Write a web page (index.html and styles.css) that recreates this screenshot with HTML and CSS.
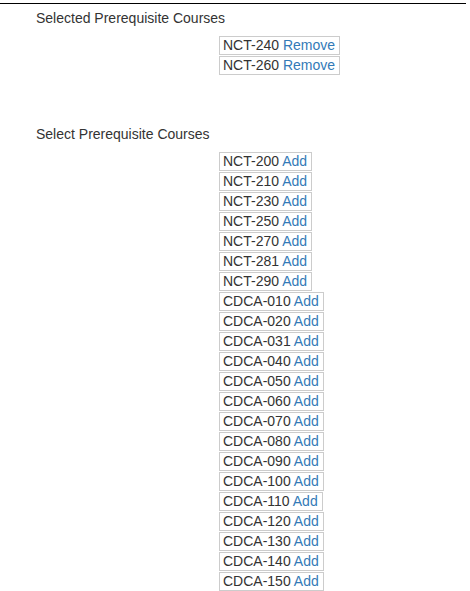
FILE: index.html
```html
<!DOCTYPE html>
<html>
<head>
<meta charset="utf-8">
<link rel="stylesheet" href="styles.css">
</head>
<body>
<div class="rule"></div>
<section class="block">
  <div class="heading">Selected Prerequisite Courses</div>
  <div class="list">
    <div class="item">NCT-240 <a href="#">Remove</a></div>
    <div class="item">NCT-260 <a href="#">Remove</a></div>
  </div>
</section>
<section class="block second">
  <div class="heading">Select Prerequisite Courses</div>
  <div class="list">
    <div class="item">NCT-200 <a href="#">Add</a></div>
    <div class="item">NCT-210 <a href="#">Add</a></div>
    <div class="item">NCT-230 <a href="#">Add</a></div>
    <div class="item">NCT-250 <a href="#">Add</a></div>
    <div class="item">NCT-270 <a href="#">Add</a></div>
    <div class="item">NCT-281 <a href="#">Add</a></div>
    <div class="item">NCT-290 <a href="#">Add</a></div>
    <div class="item">CDCA-010 <a href="#">Add</a></div>
    <div class="item">CDCA-020 <a href="#">Add</a></div>
    <div class="item">CDCA-031 <a href="#">Add</a></div>
    <div class="item">CDCA-040 <a href="#">Add</a></div>
    <div class="item">CDCA-050 <a href="#">Add</a></div>
    <div class="item">CDCA-060 <a href="#">Add</a></div>
    <div class="item">CDCA-070 <a href="#">Add</a></div>
    <div class="item">CDCA-080 <a href="#">Add</a></div>
    <div class="item">CDCA-090 <a href="#">Add</a></div>
    <div class="item">CDCA-100 <a href="#">Add</a></div>
    <div class="item">CDCA-110 <a href="#">Add</a></div>
    <div class="item">CDCA-120 <a href="#">Add</a></div>
    <div class="item">CDCA-130 <a href="#">Add</a></div>
    <div class="item">CDCA-140 <a href="#">Add</a></div>
    <div class="item">CDCA-150 <a href="#">Add</a></div>
  </div>
</section>
</body>
</html>
```

FILE: styles.css
```css
html, body {
  margin: 0;
  padding: 0;
  background: #fff;
}
body {
  font-family: "Liberation Sans", Arial, sans-serif;
  font-size: 14px;
  color: #333;
  overflow: hidden;
}
.rule {
  margin: 3px 4px 0 0;
  border-top: 1px solid #000;
}
.block {
  padding-top: 4px;
}
.block.second {
  padding-top: 49px;
}
.heading {
  padding-left: 36px;
  line-height: 20px;
}
.list {
  display: flex;
  flex-direction: column;
  align-items: flex-start;
  gap: 1px;
  margin-top: 8px;
  padding-left: 219px;
}
.item {
  border: 1px solid #ccc;
  padding: 0 4px 0 3px;
  line-height: 17px;
  white-space: nowrap;
}
.item a {
  color: #337ab7;
  text-decoration: none;
}
```
